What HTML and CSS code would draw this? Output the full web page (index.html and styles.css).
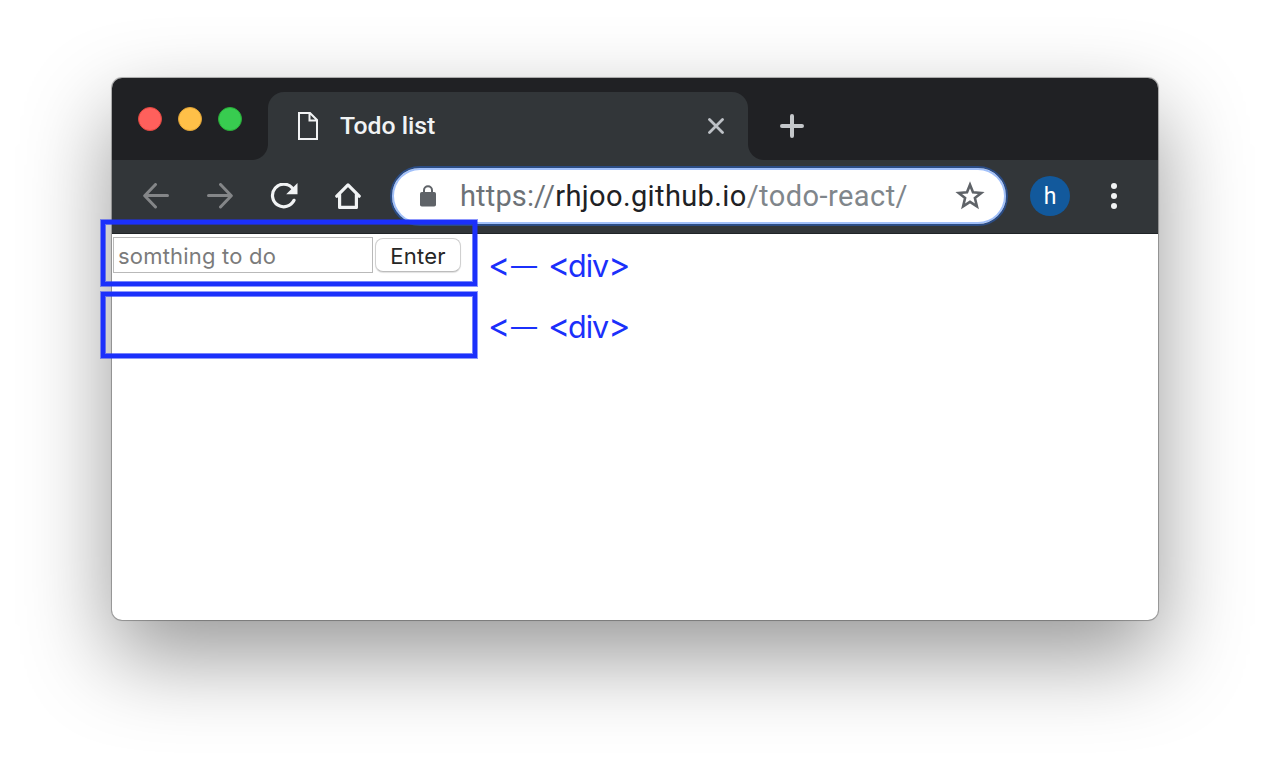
FILE: index.html
```
<!DOCTYPE html>
<html lang="en">
<head>
<meta charset="utf-8">
<title>Todo list</title>
<link rel="stylesheet" href="styles.css">
</head>
<body>
<main class="window">
  <header class="tab-strip">
    <div class="lights"><i class="light red"></i><i class="light yellow"></i><i class="light green"></i></div>
    <div class="tab">
      <svg class="tab-file" width="20" height="28" viewBox="0 0 20 28" fill="none" stroke="#f1f3f4" stroke-width="2"><path d="M1 1H12L19 8V27H1ZM11.500 1V8.500H19"/></svg>
      <span class="tab-title">Todo list</span>
      <svg width="16" height="16" viewBox="0 0 16 16" fill="none" stroke="#bdc1c6" stroke-width="2.800" stroke-linecap="round"><path d="M1.500 1.500L14.500 14.500M14.500 1.500L1.500 14.500"/></svg>
    </div>
    <svg class="new-tab" width="24" height="24" viewBox="0 0 24 24" fill="none" stroke="#c4c7ca" stroke-width="4" stroke-linecap="round"><path d="M12 2V22M2 12H22"/></svg>
  </header>
  <nav class="toolbar">
    <div class="nav-icons">
      <svg width="26" height="26" viewBox="0 0 26 26" fill="none" stroke="#848688" stroke-width="3" stroke-linecap="round" stroke-linejoin="round"><path d="M24.500 12.500H2M12.500 1.500L1.700 12.700L12.500 24"/></svg>
      <svg width="26" height="26" viewBox="0 0 26 26" fill="none" stroke="#848688" stroke-width="3" stroke-linecap="round" stroke-linejoin="round"><path d="M1.500 12.500H24M13.500 1.500L24.300 12.700L13.500 24"/></svg>
      <svg class="reload" width="28" height="26" viewBox="0 0 28 26" fill="none" stroke="#f1f3f4" stroke-width="3.200" stroke-linecap="round"><path d="M22.300 5A11.300 11.300 0 1 0 24 17.300"/><path d="M27.500 0V11.300H16.200Z" fill="#f1f3f4" stroke="none"/></svg>
      <svg width="26" height="26" viewBox="0 0 26 26" fill="none" stroke="#f1f3f4" stroke-width="3.200" stroke-linecap="round" stroke-linejoin="round"><path d="M1.800 13.200L13 1.900L24.200 13.200M4.600 11.500V24.400H21.400V11.500"/></svg>
    </div>
    <div class="address">
      <svg class="lock" width="16" height="22" viewBox="0 0 16 22" fill="#5f6368"><rect y="7" width="16" height="14.500" rx="1.800"/><path d="M4 8V5.200A4 4 0 0 1 12 5.200V8" fill="none" stroke="#5f6368" stroke-width="2"/></svg>
      <span class="url"><span class="scheme">https://</span><span class="host">rhjoo.github.io</span><span class="path">/todo-react/</span></span>
      <svg class="star" width="30" height="30" viewBox="0 0 30 30" fill="none" stroke="#5f6368" stroke-width="2.600"><path d="M15 3.700L18 11.200L26.300 11.900L19.900 17.100L21.900 25.300L15 20.900L8.100 25.300L10.100 17.100L3.700 11.900L12 11.200Z"/></svg>
    </div>
    <div class="avatar">h</div>
    <div class="menu"><i></i><i></i><i></i></div>
  </nav>
  <section class="page">
    <form class="entry"><input class="todo" type="text" placeholder="somthing to do"><button class="enter" type="button">Enter</button></form>
  </section>
</main>
<div class="outline outline-form"></div>
<div class="outline outline-list"></div>
<div class="note note-form"><span class="arrow">&lt;<span class="dash">—</span></span><span class="tag"><span class="angle">&lt;</span><span>div</span><span class="angle">&gt;</span></span></div>
<div class="note note-list"><span class="arrow">&lt;<span class="dash">—</span></span><span class="tag"><span class="angle">&lt;</span><span>div</span><span class="angle">&gt;</span></span></div>
</body>
</html>
```
FILE: styles.css
```
* { box-sizing: border-box; }
body { margin: 0; padding: 78px 112px 0; height: 768px; background: #fff; overflow: hidden; position: relative; font-family: Roboto, "Liberation Sans", sans-serif; }
svg { display: block; flex: none; }
.window { width: 1046px; height: 542px; border-radius: 10px; background: #fff; overflow: hidden; box-shadow: 0 0 0 1px rgba(0,0,0,.22), 0 0 2px rgba(0,0,0,.25), 0 36px 88px rgba(0,0,0,.41); }
.tab-strip { height: 82px; background: #202124; display: flex; }
.lights { width: 156px; padding: 29px 0 0 26px; display: flex; gap: 16px; }
.light { width: 24px; height: 24px; border-radius: 50%; border: 1px solid; }
.red { background: #ff605c; border-color: #e2463f; }
.yellow { background: #ffc048; border-color: #e0a336; }
.green { background: #38cc50; border-color: #28ad38; }
.tab { position: relative; width: 480px; height: 68px; margin-top: 14px; padding: 0 24px 0 30px; border-radius: 16px 16px 0 0; background: #323639; display: flex; align-items: center; }
.tab::before, .tab::after { content: ""; position: absolute; bottom: 0; width: 16px; height: 16px; }
.tab::before { left: -16px; background: radial-gradient(circle at 0 0, transparent 15.5px, #323639 16.500px); }
.tab::after { right: -16px; background: radial-gradient(circle at 100% 0, transparent 15.5px, #323639 16.500px); }
.tab-title { flex: 1; margin-left: 22px; font-size: 24.8px; font-weight: 500; line-height: 30px; color: #f1f3f4; }
.new-tab { margin: 36px 0 0 32px; }
.toolbar { height: 74px; padding-left: 31px; background: #323639; border-bottom: 1px solid #202427; display: flex; }
.nav-icons { width: 247px; padding-top: 23px; display: flex; gap: 38px; align-items: flex-start; }
.nav-icons svg:last-child { margin-left: -2px; }
.reload { margin-left: -1px; margin-right: 1px; }
.address { width: 618px; height: 60px; margin-top: 6px; padding: 0 22px 0 26px; border: 2px solid #2b4c84; border-radius: 30px; background: #fff; box-shadow: inset 0 0 0 2px #a1c0fa; display: flex; align-items: center; }
.lock { margin-left: 2px; }
.url { flex: 1; margin-left: 24px; font-size: 29px; line-height: 36px; white-space: nowrap; }
.scheme { color: #6d7277; letter-spacing: .15px; }
.host { color: #202124; letter-spacing: .38px; }
.path { color: #80868b; letter-spacing: .45px; }
.star { margin-right: -1px; }
.avatar { width: 40px; height: 40px; margin: 16px 0 0 22px; border-radius: 50%; background: #12599c; color: #fff; font-size: 23px; line-height: 41px; text-align: center; }
.menu { margin: 23px 0 0 41px; display: flex; flex-direction: column; gap: 4px; }
.menu i { width: 6px; height: 6px; border-radius: 50%; background: #f1f3f4; }
.page { padding: 3px 1px; }
.entry { display: flex; gap: 2px; }
.todo { width: 260px; height: 36px; padding: 3px 4px 1px; border: 1px solid #b9b9b9; font: 22px Inter, sans-serif; letter-spacing: .2px; outline: none; background: #fff; }
.todo::placeholder { color: #7b7b7b; opacity: 1; }
.enter { width: 86px; height: 34px; margin-top: 1px; padding: 2px 0 0; border: 1px solid #d0d0d0; border-bottom-color: #bcbcbc; border-radius: 8px; background: #fff; box-shadow: 0 1px 1px rgba(0,0,0,.12); font: 22px Inter, sans-serif; letter-spacing: .2px; color: #262626; }
.outline { position: absolute; left: 101px; width: 376px; height: 66px; border: 4px solid #1b30fb; box-shadow: 0 0 0 1px rgba(27,48,251,.5), inset 0 0 0 1px rgba(27,48,251,.6); }
.outline-form { top: 220px; }
.outline-list { top: 292px; }
.note { position: absolute; left: 488px; display: flex; font: 30.5px/36px Inter, sans-serif; font-variant-ligatures: none; font-feature-settings: "calt" 0, "liga" 0; letter-spacing: -1px; color: #1b30fb; }
.note-form { top: 247px; }
.note-list { top: 308px; }
.arrow { width: 60px; }
.arrow, .angle { font-size: 33.5px; letter-spacing: -2.2px; }
.dash { margin-left: 3px; font-size: 26px; line-height: 1; vertical-align: 2px; }
```
